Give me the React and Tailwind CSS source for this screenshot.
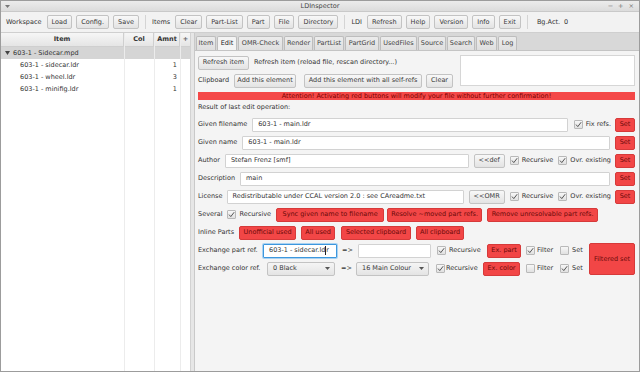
import React from "react";

function Btn({ children, className = "", w }) {
  return (
    <div
      className={`h-[14px] px-[4px] flex items-center justify-center shrink-0 border border-[#c3c3c3] rounded-[2px] bg-linear-to-b from-[#f8f8f8] to-[#e3e3e3] text-[#3a3a3a] whitespace-nowrap ${w || ""} ${className}`}
    >
      {children}
    </div>
  );
}

function RedBtn({ children, className = "", w }) {
  return (
    <div
      className={`h-[14px] px-[4px] flex items-center justify-center shrink-0 border border-[#d63a3a] rounded-[2px] bg-[#f24646] text-[#6a0a0a] whitespace-nowrap ${w || ""} ${className}`}
    >
      {children}
    </div>
  );
}

function Cb({ checked = true, className = "" }) {
  return (
    <div
      className={`w-[9px] h-[9px] shrink-0 border border-[#b9b9b9] rounded-[1px] bg-linear-to-b from-[#f7f7f7] to-[#e1e1e1] flex items-center justify-center ${className}`}
    >
      {checked && (
        <svg width="7" height="7" viewBox="0 0 7 7">
          <path d="M1 3.6 L2.8 5.6 L6.2 1.2" fill="none" stroke="#555" strokeWidth="1" />
        </svg>
      )}
    </div>
  );
}

function Input({ children, className = "" }) {
  return (
    <div
      className={`h-[14px] flex items-center px-[5px] bg-white border border-[#d2d2d2] rounded-[1px] text-[#333] whitespace-nowrap overflow-hidden ${className}`}
    >
      {children}
    </div>
  );
}

function Select({ children, className = "" }) {
  return (
    <div
      className={`h-[14px] flex items-center justify-between pl-[5px] pr-[4px] border border-[#c3c3c3] rounded-[2px] bg-linear-to-b from-[#f5f5f5] to-[#e4e4e4] text-[#3a3a3a] whitespace-nowrap shrink-0 ${className}`}
    >
      <span>{children}</span>
      <svg width="5" height="3" viewBox="0 0 5 3">
        <polygon points="0,0 5,0 2.5,3" fill="#555" />
      </svg>
    </div>
  );
}

function Tri() {
  return (
    <svg width="5" height="4" viewBox="0 0 5 4">
      <polygon points="0,0 5,0 2.5,4" fill="#444" />
    </svg>
  );
}

function Sep() {
  return <div className="w-px h-[14px] bg-[#d4d4d4] mx-[2px]" />;
}

const tabs = [
  ["Item", "w-[20px]"],
  ["Edit", "w-[20px]"],
  ["OMR-Check", "w-[45px]"],
  ["Render", "w-[29px]"],
  ["PartList", "w-[30px]"],
  ["PartGrid", "w-[34px]"],
  ["UsedFiles", "w-[37px]"],
  ["Source", "w-[28px]"],
  ["Search", "w-[28px]"],
  ["Web", "w-[21px]"],
  ["Log", "w-[19px]"],
];

export default function App() {
  return (
    <div className="w-[640px] h-[372px] overflow-hidden flex flex-col border border-[#9c9c9c] bg-[#f2f2f2] text-[6.5px] leading-none text-[#333] font-['DejaVu_Sans',sans-serif]">
      {/* Title bar */}
      <div className="h-[11px] shrink-0 grid grid-cols-3 items-center bg-linear-to-b from-[#ececec] to-[#dcdcdc] border-b border-[#c9c9c9]">
        <div className="pl-[4px] flex items-center">
          <svg width="5" height="3" viewBox="0 0 5 3">
            <polygon points="0,0 5,0 2.5,3" fill="#777" />
          </svg>
        </div>
        <div className="text-center text-[#444]">LDInspector</div>
        <div className="flex justify-end gap-[5px] pr-[5px] text-[#777]">
          <span>−</span>
          <span>+</span>
          <span>×</span>
        </div>
      </div>

      {/* Toolbar */}
      <div className="h-[21px] shrink-0 flex items-center pl-[5px] gap-[4px] bg-[#f2f2f2] border-b border-[#cfcfcf]">
        <span className="mr-[1px]">Workspace</span>
        <Btn>Load</Btn>
        <Btn>Config.</Btn>
        <Btn>Save</Btn>
        <Sep />
        <span className="mr-[1px]">Items</span>
        <Btn>Clear</Btn>
        <Btn>Part-List</Btn>
        <Btn>Part</Btn>
        <Btn>File</Btn>
        <Btn>Directory</Btn>
        <Sep />
        <span className="mr-[1px]">LDI</span>
        <Btn>Refresh</Btn>
        <Btn>Help</Btn>
        <Btn>Version</Btn>
        <Btn>Info</Btn>
        <Btn>Exit</Btn>
        <Sep />
        <span className="ml-[3px]">Bg.Act.</span>
        <span>0</span>
      </div>

      {/* Main */}
      <div className="flex-1 min-h-0 flex">
        {/* Left tree table */}
        <div className="w-[189px] shrink-0 bg-white flex">
          <div className="w-[124px] flex flex-col border-r border-[#ececec]">
            <div className="h-[14px] flex items-center justify-center font-bold border-b border-r border-[#cfcfcf] bg-linear-to-b from-[#f6f6f6] to-[#e5e5e5]">
              Item
            </div>
            <div className="h-[12px] flex items-center pl-[4px] gap-[3px] bg-[#d5d5d5]">
              <Tri />
              <span>603-1 - Sidecar.mpd</span>
            </div>
            <div className="h-[12px] flex items-center pl-[19px]">603-1 - sidecar.ldr</div>
            <div className="h-[12px] flex items-center pl-[19px]">603-1 - wheel.ldr</div>
            <div className="h-[12px] flex items-center pl-[19px]">603-1 - minifig.ldr</div>
          </div>
          <div className="w-[30px] flex flex-col border-r border-[#ececec]">
            <div className="h-[14px] flex items-center justify-center font-bold border-b border-r border-[#cfcfcf] bg-linear-to-b from-[#f6f6f6] to-[#e5e5e5]">
              Col
            </div>
            <div className="h-[12px] bg-[#d5d5d5]" />
          </div>
          <div className="w-[26px] flex flex-col border-r border-[#ececec]">
            <div className="h-[14px] flex items-center justify-center font-bold border-b border-r border-[#cfcfcf] bg-linear-to-b from-[#f6f6f6] to-[#e5e5e5]">
              Amnt
            </div>
            <div className="h-[12px] bg-[#d5d5d5]" />
            <div className="h-[12px] flex items-center justify-end pr-[3px]">1</div>
            <div className="h-[12px] flex items-center justify-end pr-[3px]">3</div>
            <div className="h-[12px] flex items-center justify-end pr-[3px]">1</div>
          </div>
          <div className="flex-1 flex flex-col">
            <div className="h-[14px] flex items-center justify-center font-bold border-b border-[#cfcfcf] bg-linear-to-b from-[#f6f6f6] to-[#e5e5e5] text-[#666]">
              +
            </div>
            <div className="h-[12px] bg-[#d5d5d5]" />
          </div>
        </div>

        {/* Splitter */}
        <div className="w-[5px] shrink-0 bg-[#e6e6e6] border-l border-[#d2d2d2] border-r border-r-[#c9c9c9]" />

        {/* Right panel */}
        <div className="flex-1 min-w-0 flex flex-col">
          <div className="h-[18px] shrink-0 flex items-end pl-[1px] gap-[1px] bg-[#d8d8d8] border-b border-[#c4c4c4]">
            {tabs.map(([t, w]) => (
              <div
                key={t}
                className={`${w} h-[14px] flex items-center justify-center border border-b-0 border-[#bdbdbd] rounded-t-[2px] ${
                  t === "Edit" ? "bg-[#f4f4f4] text-[#222]" : "bg-linear-to-b from-[#ececec] to-[#dfdfdf] text-[#444]"
                }`}
              >
                {t}
              </div>
            ))}
          </div>

          <div className="flex-1 bg-[#f4f4f4] pl-[3px] pr-[4px] pt-[4px] flex flex-col">
            {/* Rows A/B with textarea */}
            <div className="flex gap-[6px]">
              <div className="flex-1 flex flex-col gap-[5px] pt-[1px]">
                <div className="h-[13px] flex items-center">
                  <Btn w="w-[51px]">Refresh item</Btn>
                  <span className="ml-[5px]">Refresh item (reload file, rescan directory...)</span>
                </div>
                <div className="h-[13px] flex items-center">
                  <span>Clipboard</span>
                  <Btn w="w-[62px]" className="ml-[5px]">Add this element</Btn>
                  <Btn w="w-[118px]" className="ml-[8px]">Add this element with all self-refs</Btn>
                  <Btn w="w-[27px]" className="ml-[4px]">Clear</Btn>
                </div>
              </div>
              <div className="w-[175px] h-[31px] bg-white border border-[#d6d6d6]" />
            </div>

            {/* Red attention bar */}
            <div className="mt-[5px] h-[8px] bg-[#f44848] flex items-center justify-center text-[#7a0000]">
              Attention! Activating red buttons will modify your file without further confirmation!
            </div>

            <div className="h-[13px] flex items-center mt-[1px]">Result of last edit operation:</div>

            <div className="mt-[4px] flex flex-col gap-[5px]">
              {/* Given filename */}
              <div className="h-[13px] flex items-center">
                <span>Given filename</span>
                <Input className="ml-[5px] flex-1">603-1 - main.ldr</Input>
                <Cb className="ml-[6px]" />
                <span className="ml-[3px]">Fix refs.</span>
                <RedBtn w="w-[20px]" className="ml-[4px]">Set</RedBtn>
              </div>
              {/* Given name */}
              <div className="h-[13px] flex items-center">
                <span>Given name</span>
                <Input className="ml-[5px] flex-1">603-1 - main.ldr</Input>
                <RedBtn w="w-[20px]" className="ml-[5px]">Set</RedBtn>
              </div>
              {/* Author */}
              <div className="h-[13px] flex items-center">
                <span>Author</span>
                <Input className="ml-[5px] flex-1">Stefan Frenz [smf]</Input>
                <Btn w="w-[31px]" className="ml-[5px]">&lt;&lt;def</Btn>
                <Cb className="ml-[5px]" />
                <span className="ml-[3px]">Recursive</span>
                <Cb className="ml-[5px]" />
                <span className="ml-[3px]">Ovr. existing</span>
                <RedBtn w="w-[20px]" className="ml-[4px]">Set</RedBtn>
              </div>
              {/* Description */}
              <div className="h-[13px] flex items-center">
                <span>Description</span>
                <Input className="ml-[5px] flex-1">main</Input>
                <RedBtn w="w-[20px]" className="ml-[5px]">Set</RedBtn>
              </div>
              {/* License */}
              <div className="h-[13px] flex items-center">
                <span>License</span>
                <Input className="ml-[4px] flex-1">Redistributable under CCAL version 2.0 : see CAreadme.txt</Input>
                <Btn w="w-[36px]" className="ml-[5px]">&lt;&lt;OMR</Btn>
                <Cb className="ml-[5px]" />
                <span className="ml-[3px]">Recursive</span>
                <Cb className="ml-[5px]" />
                <span className="ml-[3px]">Ovr. existing</span>
                <RedBtn w="w-[20px]" className="ml-[4px]">Set</RedBtn>
              </div>
              {/* Several */}
              <div className="h-[13px] flex items-center">
                <span>Several</span>
                <Cb className="ml-[5px]" />
                <span className="ml-[3px]">Recursive</span>
                <RedBtn w="w-[108px]" className="ml-[5px]">Sync given name to filename</RedBtn>
                <RedBtn w="w-[95px]" className="ml-[3px]">Resolve ~moved part refs.</RedBtn>
                <RedBtn w="w-[111px]" className="ml-[5px]">Remove unresolvable part refs.</RedBtn>
              </div>
              {/* Inline Parts */}
              <div className="h-[13px] flex items-center">
                <span>Inline Parts</span>
                <RedBtn w="w-[57px]" className="ml-[5px]">Unofficial used</RedBtn>
                <RedBtn w="w-[34px]" className="ml-[5px]">All used</RedBtn>
                <RedBtn w="w-[70px]" className="ml-[6px]">Selected clipboard</RedBtn>
                <RedBtn w="w-[48px]" className="ml-[5px]">All clipboard</RedBtn>
              </div>
              {/* Exchange rows */}
              <div className="flex items-start">
                <div className="flex flex-col gap-[5px]">
                  <div className="h-[13px] flex items-center">
                    <span className="w-[65px] shrink-0">Exchange part ref.</span>
                    <div className="w-[74px] h-[14px] flex items-center px-[5px] bg-white border border-[#3d97dd] rounded-[1px] shadow-[0_0_0_1px_#a9d2f2] whitespace-nowrap overflow-hidden">
                      <span>603-1 - sidecar.ld</span>
                      <span className="w-px h-[9px] bg-[#222]" />
                      <span>r</span>
                    </div>
                    <span className="ml-[5px] w-[8px]">=&gt;</span>
                    <Input className="ml-[8px] w-[73px]" />
                    <Cb className="ml-[6px]" />
                    <span className="ml-[3px] w-[32px]">Recursive</span>
                    <RedBtn w="w-[34px]" className="ml-[6px]">Ex. part</RedBtn>
                    <Cb className="ml-[5px]" />
                    <span className="ml-[2px] w-[17px]">Filter</span>
                    <Cb className="ml-[6px]" checked={false} />
                    <span className="ml-[3px]">Set</span>
                  </div>
                  <div className="h-[13px] flex items-center">
                    <span className="w-[69px] shrink-0">Exchange color ref.</span>
                    <Select className="w-[68px]">0 Black</Select>
                    <span className="ml-[6px] w-[8px]">=&gt;</span>
                    <Select className="ml-[7px] w-[73px]">16 Main Colour</Select>
                    <Cb className="ml-[7px]" />
                    <span className="ml-[1px] w-[32px]">Recursive</span>
                    <RedBtn w="w-[37px]" className="ml-[5px]">Ex. color</RedBtn>
                    <Cb className="ml-[6px]" checked={false} />
                    <span className="ml-[2px] w-[16px]">Filter</span>
                    <Cb className="ml-[7px]" />
                    <span className="ml-[3px]">Set</span>
                  </div>
                </div>
                <div className="ml-auto -mt-[1px] w-[46px] h-[32px] flex items-center justify-center border border-[#d63a3a] rounded-[2px] bg-[#f24646] text-[#6a0a0a]">
                  Filtered set
                </div>
              </div>
            </div>
          </div>
        </div>
      </div>
    </div>
  );
}
